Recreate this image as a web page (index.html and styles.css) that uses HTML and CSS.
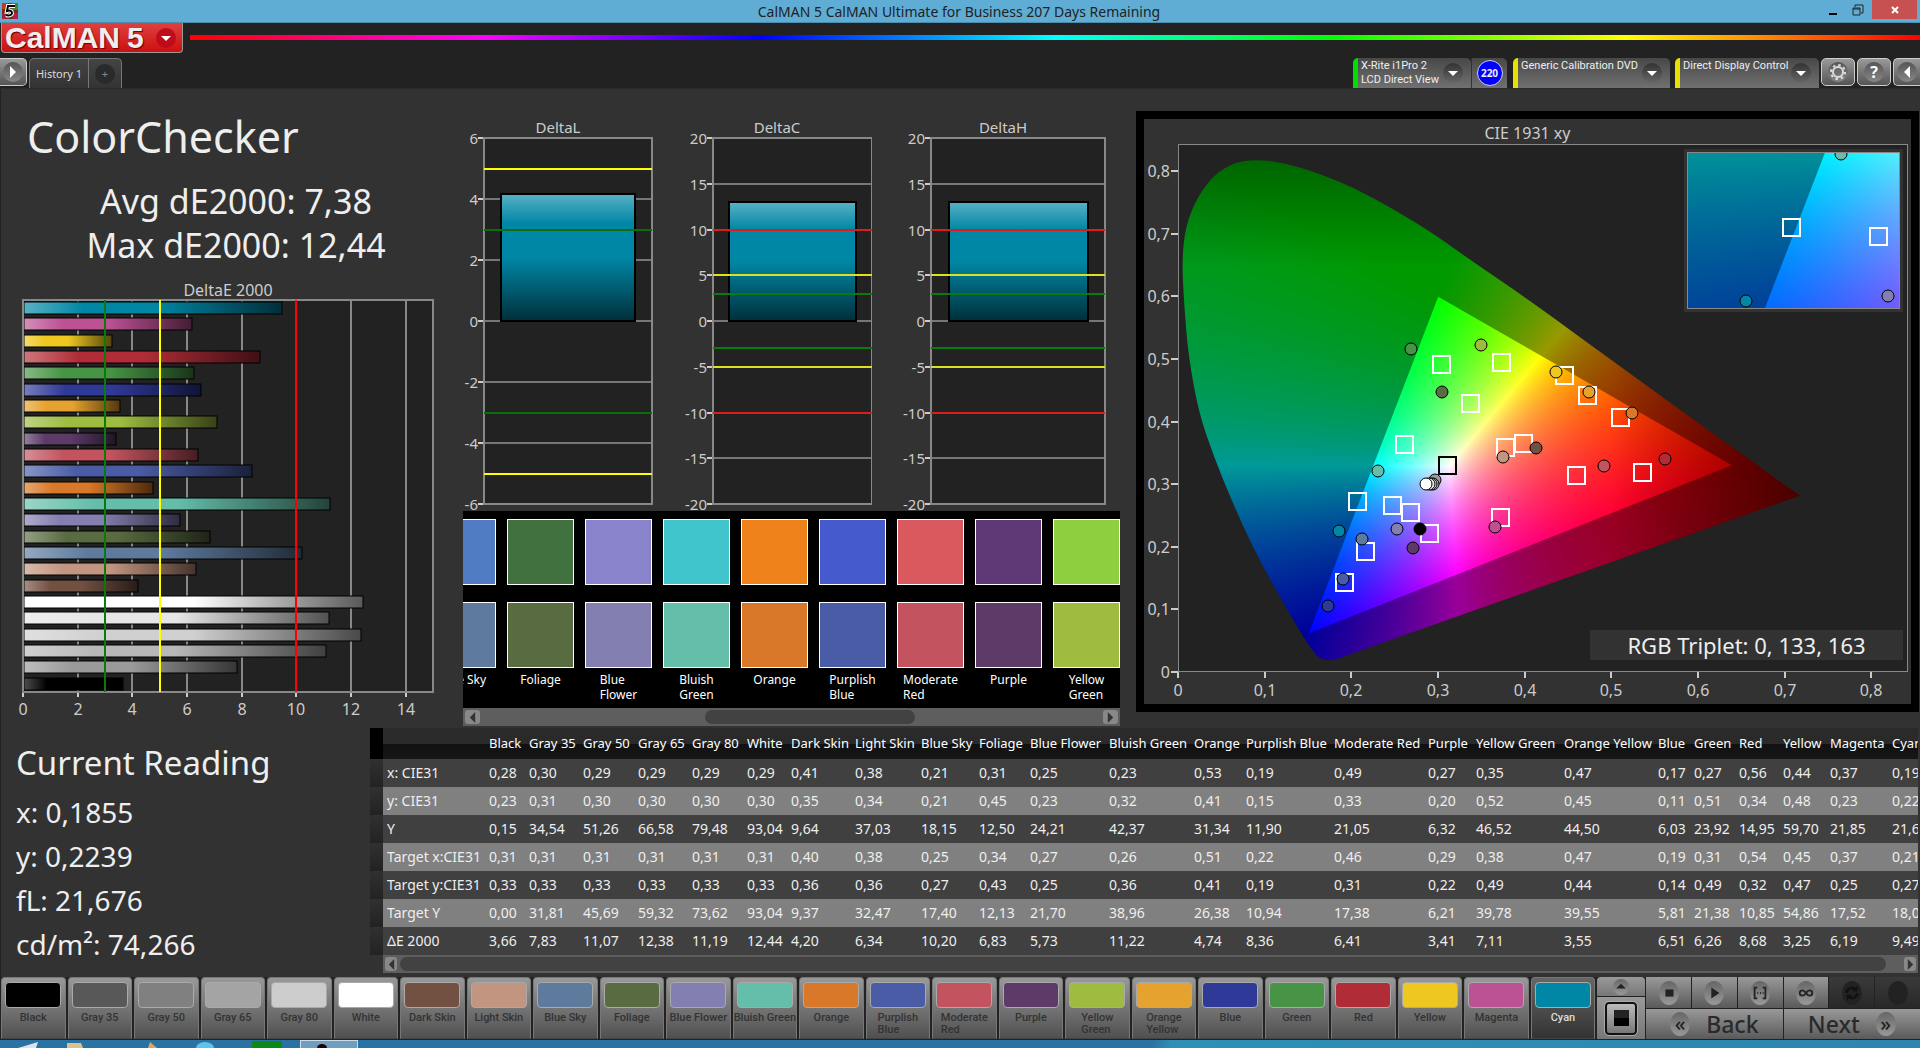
FILE: index.html
```html
<!DOCTYPE html>
<html lang="en">
<head>
<meta charset="utf-8">
<title>CalMAN 5</title>
<link rel="stylesheet" href="styles.css">
</head>
<body>
<header class="titlebar">
  <svg class="app-icon" viewBox="0 0 16 16" aria-hidden="true">
    <rect width="16" height="16" fill="#7a2a20"/><path d="M0 0h6v6H0z" fill="#c03a1c"/><path d="M10 0h6v7h-6z" fill="#3f8a3a"/><path d="M0 11h5v5H0z" fill="#a02038"/><path d="M11 10h5v6h-5z" fill="#b0204a"/>
    <path d="M13 3H6L5 8c3-1 5 0 5 2s-3 3-6 2" fill="none" stroke="#fff" stroke-width="4"/>
    <path d="M13 3H6L5 8c3-1 5 0 5 2s-3 3-6 2" fill="none" stroke="#000" stroke-width="2"/>
  </svg>
  <span class="window-title">CalMAN 5 CalMAN Ultimate for Business 207 Days Remaining</span>
  <div class="window-buttons">
    <button aria-label="Minimize"><svg viewBox="0 0 12 12"><path d="M2 9h8v2H2z"/></svg></button>
    <button aria-label="Restore"><svg viewBox="0 0 12 12"><path d="M1 4h7v7H1zM1 5h7M3 3V1h8v8H9" fill="none" stroke="#222"/></svg></button>
    <button class="close" aria-label="Close"><svg viewBox="0 0 12 12"><path d="M3 3l6 6M9 3l-6 6" fill="none" stroke="#fff" stroke-width="2"/></svg></button>
  </div>
</header>

<div class="brand-row">
  <button class="brand"><span>CalMAN</span><span>5</span><i class="knob"><svg viewBox="0 0 20 20"><path d="M5 8h10l-5 5z"/></svg></i></button>
  <div class="rainbow"></div>
</div>

<nav class="toolbar">
  <button class="square-button open-left" aria-label="Expand"><i class="knob"><svg viewBox="0 0 20 20"><path d="M7 4l6 6-6 6z"/></svg></i></button>
  <div class="tabs"><button class="tab">History 1</button><button class="tab add" aria-label="Add tab"><i>+</i></button></div>
  <div class="devices">
    <button class="device meter">X-Rite i1Pro 2<br>LCD Direct View<i class="knob"><svg viewBox="0 0 20 20"><path d="M5 8h10l-5 5z"/></svg></i></button>
    <div class="count"><b>220</b></div>
    <button class="device source">Generic Calibration DVD<i class="knob"><svg viewBox="0 0 20 20"><path d="M5 8h10l-5 5z"/></svg></i></button>
    <button class="device display">Direct Display Control<i class="knob"><svg viewBox="0 0 20 20"><path d="M5 8h10l-5 5z"/></svg></i></button>
    <button class="square-button" aria-label="Settings"><i class="knob"><svg viewBox="0 0 20 20"><circle cx="10" cy="10" r="5" fill="none" stroke="#ddd" stroke-width="2"/><circle cx="10" cy="10" r="7" fill="none" stroke="#ddd" stroke-width="2" stroke-dasharray="2.5 3"/></svg></i></button>
    <button class="square-button" aria-label="Help"><i class="knob"><b>?</b></i></button>
    <button class="square-button open-right" aria-label="Collapse"><i class="knob"><svg viewBox="0 0 20 20"><path d="M13 4l-6 6 6 6z"/></svg></i></button>
  </div>
</nav>

<main>
  <div class="upper">
    <section class="summary">
      <h1>ColorChecker</h1>
      <p class="stats">Avg dE2000: 7,38<br>Max dE2000: 12,44</p>
      <svg class="chart" id="delta-e"></svg>
    </section>
    <section class="middle">
      <div class="deltas">
        <svg class="chart" id="delta-l"></svg>
        <svg class="chart" id="delta-c"></svg>
        <svg class="chart" id="delta-h"></svg>
      </div>
      <div class="compare"><div class="compare-track" id="compare"></div></div>
      <div class="scrollbar wide">
        <button aria-label="Scroll left"><svg viewBox="0 0 10 12"><path d="M8 0v12L2 6z"/></svg></button>
        <div class="groove"><div class="thumb"></div></div>
        <button aria-label="Scroll right"><svg viewBox="0 0 10 12"><path d="M2 0v12l6-6z"/></svg></button>
      </div>
    </section>
    <section class="cie">
      <svg class="axes" id="cie-axes"></svg>
      <div class="plot"><canvas id="cie-canvas"></canvas><svg id="cie-marks"></svg></div>
      <div class="inset"><canvas id="inset-canvas"></canvas><svg id="inset-marks"></svg></div>
      <div class="triplet">RGB Triplet: 0, 133, 163</div>
    </section>
  </div>
  <div class="lower">
    <section class="reading">
      <h2>Current Reading</h2>
      <p>x: 0,1855</p><p>y: 0,2239</p><p>fL: 21,676</p><p>cd/m²: 74,266</p>
    </section>
    <section class="results">
      <div class="table-clip"><table id="results"></table></div>
      <div class="scrollbar">
        <button aria-label="Scroll left"><svg viewBox="0 0 10 12"><path d="M8 0v12L2 6z"/></svg></button>
        <div class="groove"><div class="thumb"></div></div>
        <button aria-label="Scroll right"><svg viewBox="0 0 10 12"><path d="M2 0v12l6-6z"/></svg></button>
      </div>
    </section>
  </div>
</main>

<footer class="pattern-bar">
  <div class="patterns" id="patterns"></div>
  <div class="single">
    <button class="up" aria-label="Up"><i class="disc"><svg viewBox="0 0 20 20"><path d="M4 12h12l-6-6z"/></svg></i></button>
    <button class="halt" aria-label="Pattern window"><span></span></button>
  </div>
  <div class="transport">
    <button aria-label="Stop"><i class="disc"><svg viewBox="0 0 20 20"><path d="M6 6h9v8H6z"/></svg></i></button>
    <button aria-label="Play"><i class="disc"><svg viewBox="0 0 20 20"><path d="M7 4l9 6-9 6z"/></svg></i></button>
    <button aria-label="Read series"><i class="disc"><svg viewBox="0 0 20 20"><path d="M7 4H4v12h3M13 4h3v12h-3M7 10h1m2 0h1m2 0h1" fill="none" stroke="#222" stroke-width="2"/></svg></i></button>
    <button aria-label="Continuous"><i class="disc"><svg viewBox="0 0 20 20"><path d="M10 10c-2-3-3-3-4-3a3 3 0 0 0 0 6c1 0 2 0 4-3s3-3 4-3a3 3 0 0 1 0 6c-1 0-2 0-4-3z" fill="none" stroke="#222" stroke-width="2"/></svg></i></button>
    <button class="off" aria-label="Refresh"><i class="disc"><svg viewBox="0 0 20 20"><path d="M4 10a6 6 0 0 1 10-4M16 10a6 6 0 0 1-10 4" fill="none" stroke="#111" stroke-width="3"/><path d="M16 2v6h-6zM4 18v-6h6z" fill="#111"/></svg></i></button>
    <button class="off" aria-label="Record"><i class="disc"></i></button>
    <button class="nav"><i class="disc">«</i>Back</button>
    <button class="nav">Next<i class="disc">»</i></button>
  </div>
</footer>
<div class="taskbar"><svg viewBox="0 0 400 8"><path d="M18 8l20-6-2 6z" fill="#d8e4ee"/><path d="M67 3h14l2 5H67z" fill="#d9c38a"/><path d="M150 2l7 6h-9z" fill="#e0a468"/><ellipse cx="205" cy="8" rx="9" ry="6" fill="#5cc4ea"/><path d="M252 1h30v7h-30z" fill="#0a8a14"/><path d="M300 0h58v8h-58z" fill="#c8dcea"/><path d="M301 1h56v7h-56z" fill="#6f9dbd"/><ellipse cx="322" cy="8" rx="5" ry="4" fill="#200"/></svg></div>
<script src="app.js"></script>
</body>
</html>
```
FILE: styles.css
```css
* { box-sizing: border-box; }
body {
  margin: 0; min-height: 100vh; display: flex; flex-direction: column;
  background: #222; color: #eee; font-family: "Noto Sans", "Open Sans", sans-serif; font-size: 14px;
  overflow: hidden;
}
button { font: inherit; color: inherit; border: 0; padding: 0; margin: 0; background: none; }
i { font-style: normal; }
svg { display: block; }
.knob, .disc { display: flex; align-items: center; justify-content: center; width: 20px; height: 20px; border-radius: 50%; }
.knob svg, .disc svg { width: 100%; height: 100%; fill: #fff; }

.titlebar { height: 23px; display: flex; align-items: flex-start; background: #5fadd4; color: #222; border-bottom: 1px solid #4c8dae; }
.app-icon { width: 16px; height: 16px; margin: 3px 0 0 2px; }
.window-title { flex: 1; text-align: center; font-size: 14px; line-height: 24px; padding-left: 80px; }
.window-buttons { display: flex; }
.window-buttons button { width: 25px; height: 19px; display: flex; align-items: center; justify-content: center; }
.window-buttons button svg { width: 12px; height: 12px; }
.window-buttons .close { width: 45px; margin: 0 3px 0 2px; background: #c75050; }

.brand-row { height: 32px; display: flex; gap: 7px; align-items: flex-start; padding-left: 1px; }
.brand {
  width: 182px; height: 30px; display: flex; align-items: center; gap: 7px; padding-left: 3px;
  background: linear-gradient(#e04040, #cc1010); border: 1px solid #999; border-top: 0; border-radius: 0 0 4px 4px;
  font: bold 30px/26px "Liberation Sans", sans-serif; color: #eee; text-shadow: 1px 1px 1px #600;
}
.brand .knob { background: #c00c18; margin-left: auto; margin-right: 6px; }
.rainbow { flex: 1; height: 5px; margin-top: 12px; background: linear-gradient(90deg, #f00, #f0f 17%, #00f 33%, #0ff 50%, #0f0 66%, #ff0 83%, #f00); }

.toolbar { height: 34px; padding-top: 3px; display: flex; align-items: flex-start; border-bottom: 1px solid #2a2a2a; }
.square-button {
  width: 34px; height: 28px; display: flex; align-items: center; justify-content: center;
  border: 1px solid #ccc; border-radius: 5px; background: linear-gradient(#999, #555);
}
.square-button .knob { background: linear-gradient(#555, #888); font-size: 16px; color: #fff; }
.open-left { width: 27px; border-left: 0; border-radius: 0 5px 5px 0; }
.open-right { width: 27px; border-right: 0; border-radius: 5px 0 0 5px; }
.tabs { display: flex; height: 30px; margin-left: 2px; border: 1px solid #777; border-bottom: 0; border-radius: 5px 5px 0 0; background: linear-gradient(#444, #333); }
.tab { width: 58px; font-size: 11px; color: #ddd; }
.tab.add { width: 33px; border-left: 1px solid #777; color: #888; display: flex; justify-content: center; align-items: center; }
.tab.add i { width: 20px; height: 20px; border-radius: 50%; background: #2a2a2a; line-height: 20px; }
.devices { margin-left: auto; display: flex; align-items: flex-start; gap: 2px; }
.device {
  position: relative; height: 30px; text-align: left; font: 11px/14px Roboto, sans-serif; padding: 1px 0 0 3px;
  display: block; border-left: 5px solid #e8e000; border-radius: 5px 5px 0 0; background: linear-gradient(#484848, #707070);
  display: flex; align-items: flex-start; white-space: nowrap;
}
.device .knob { position: absolute; right: 8px; top: 5px; background: linear-gradient(#333, #666); }
.device.meter { width: 118px; border-left-color: #0d0; }
.count { width: 36px; height: 30px; margin: 0 4px 0 -2px; display: flex; align-items: center; justify-content: center; background: linear-gradient(#484848, #707070); border-left: 1px solid #333; border-radius: 0 5px 0 0; }
.count b { width: 26px; height: 26px; border-radius: 50%; border: 1px solid #cce; background: #00f; font-size: 10px; line-height: 24px; text-align: center; }
.device.source { width: 157px; }
.device.display { width: 144px; margin-left: 3px; }

main { flex: 1; display: flex; flex-direction: column; background: #323232; border-left: 1px solid #222; }
.upper { flex: 1; display: flex; min-height: 0; }
.summary { width: 462px; display: flex; flex-direction: column; }
h1 { margin: 20px 0 0 26px; font-size: 43px; line-height: 56px; font-weight: 400; }
.stats { margin: 14px 0 0 8px; text-align: center; font-size: 34px; line-height: 44px; }
.chart { flex: 1; min-height: 0; min-width: 0; }
svg text { fill: #ccc; font-size: 15px; }
svg text.title { font-size: 16px; }
#delta-e { margin-top: 14px; }
.middle { width: 657px; display: flex; flex-direction: column; }
.deltas { height: 422px; display: flex; gap: 28px; margin-right: 14px; padding-top: 27px; }
#delta-l { flex: 190 1 0; }
#delta-c { flex: 192 1 0; }
#delta-h { flex: 206 1 0; }
.compare { height: 197px; background: #000; overflow: hidden; padding-top: 8px; }
.compare-track { display: flex; gap: 11px; margin-left: -34px; }
.compare-item { flex: none; width: 67px; display: flex; flex-direction: column; align-items: center; font-size: 12px; line-height: 15px; color: #fff; white-space: pre; }
.compare-item i { width: 67px; height: 66px; border: 1px solid #fff; margin-bottom: 17px; }
.compare-item i + i { margin-bottom: 4px; }
.scrollbar { height: 18px; display: flex; align-items: center; background: #5e5e5e; padding: 0 2px; gap: 3px; }
.scrollbar button { width: 12px; height: 14px; border-radius: 3px; background: #888; display: flex; align-items: center; justify-content: center; }
.scrollbar button svg { width: 9px; height: 11px; fill: #333; }
.scrollbar .groove { flex: 1; height: 14px; }
.scrollbar .thumb { height: 14px; width: 99%; border-radius: 7px; background: #424242; }
.scrollbar.wide button { width: 15px; }
.scrollbar.wide .thumb { width: 34%; margin-left: 36%; }

.cie { flex: 1; position: relative; margin: 22px 1px 16px 16px; border: 8px solid #000; display: grid; }
.axes { grid-area: 1 / 1; width: 100%; height: 100%; }
.plot { grid-area: 1 / 1; margin: 25px 3px 32px 34px; border: 1px solid #888; background: #222; display: grid; min-width: 0; min-height: 0; overflow: hidden; }
.plot > *, .inset > * { grid-area: 1 / 1; width: 100%; height: 100%; display: block; min-width: 0; min-height: 0; }
.inset { position: absolute; top: 30px; right: 8px; width: 219px; height: 163px; border: 3px solid #323232; outline: 1px solid #888; outline-offset: -4px; display: grid; background: #222; overflow: hidden; }
.triplet { position: absolute; right: 8px; bottom: 44px; width: 313px; line-height: 30px; background: #323232; text-align: center; font-size: 22px; }

.lower { height: 249px; display: flex; }
.reading { width: 369px; padding-left: 15px; font-size: 28px; line-height: 44px; }
.reading p { margin: 0; }
h2 { margin: 12px 0 4px; font-size: 33px; line-height: 46px; font-weight: 400; }
.results { flex: 1; min-width: 0; margin-right: 2px; }
.table-clip { overflow: hidden; }
table { border-collapse: collapse; table-layout: fixed; width: 1566px; }
th, td { padding: 0 0 0 4px; text-align: left; font-weight: 400; font-size: 14px; white-space: nowrap; height: 28px; line-height: 28px; }
thead th { height: 31px; line-height: 31px; font-size: 13px; background: linear-gradient(#2a2a2a 50%, #111 50%, #161616); color: #fff; }
thead th:first-child { background: #000; }
tbody tr { background: #404040; }
tbody tr:nth-child(even) { background: #808080; }
tbody td:first-child { background: linear-gradient(#303030, #222); }
.results .scrollbar { margin-left: 13px; }

.pattern-bar { height: 63px; display: flex; padding-bottom: 1px; }
.patterns { flex: 1595 1 0; display: grid; grid-template-columns: repeat(24, 1fr); gap: 2px; padding: 0 2px 0 1px; }
.patterns button {
  display: flex; flex-direction: column; align-items: center; justify-content: flex-start; padding-top: 4px; border-radius: 4px 4px 0 0; border: 1px solid #777; border-bottom-color: #444;
  background: linear-gradient(#999, #505050); color: #333; font: 500 11px/12px Roboto, sans-serif; white-space: pre; text-align: left; min-width: 0;
}
.patterns i { width: 56px; height: 26px; flex: none; border: 1px solid #aaa; border-radius: 4px; margin-bottom: 4px; }
.patterns .current { background: linear-gradient(#666, #333); color: #ddd; }
.single { flex: 48 1 0; display: flex; flex-direction: column; gap: 1px; }
.single button { display: flex; align-items: center; justify-content: center; background: linear-gradient(#999, #777); }
.single .up { height: 19px; border-radius: 4px 4px 0 0; }
.up .disc { width: 16px; height: 16px; }
.halt { flex: 1; }
.halt span { width: 32px; height: 33px; border: 2px solid #111; border-radius: 4px; outline: 1px solid #aaa; background: linear-gradient(#222 50%, #000 50%) center / 15px 16px no-repeat, linear-gradient(#bbb, #777); }
.transport { flex: 274 1 0; display: grid; grid-template-columns: repeat(6, 1fr); grid-template-rows: 31px 1fr; gap: 1px; padding-left: 1px; }
.transport button { display: flex; align-items: center; justify-content: center; background: linear-gradient(#999, #5a5a5a); }
.disc { background: linear-gradient(#666, #999); color: #222; font-size: 20px; }
.disc svg { fill: #222; }
.transport .disc { width: 20px; height: 24px; }
.transport .disc svg { width: 18px; height: 18px; }
.transport .off { background: linear-gradient(#3a3a3a, #282828); }
.transport .off .disc { background: #222; }
.transport .nav { grid-column: span 3; gap: 16px; font-size: 23px; font-weight: 500; color: #2a2a2a; line-height: 28px; }
.taskbar { height: 8px; background: linear-gradient(100deg, #2a72a3 60%, #2f8fb4 61%, #2d86ae); }
.taskbar svg { width: 400px; height: 8px; }
```
FILE: app.js
```js
const patches = [
  // name, reference colour, measured x, measured y, dE2000
  ["Black", "#000000", .279, .227, 3.66],
  ["Gray 35", "#9a9a9a", .296, .306, 7.83, "#585858"],
  ["Gray 50", "#b8b8b8", .294, .300, 11.07, "#808080"],
  ["Gray 65", "#d0d0d0", .292, .300, 12.38, "#a4a4a4"],
  ["Gray 80", "#e6e6e6", .289, .300, 11.19, "#cccccc"],
  ["White", "#ffffff", .286, .300, 12.44],
  ["Dark Skin", "#735142", .413, .357, 4.20],
  ["Light Skin", "#c29580", .375, .343, 6.34],
  ["Blue Sky", "#5e7a9d", .212, .211, 10.20],
  ["Foliage", "#596b41", .304, .448, 6.83],
  ["Blue Flower", "#837fb0", .252, .227, 5.73],
  ["Bluish Green", "#64bea9", .230, .320, 11.22],
  ["Orange", "#d97828", .524, .413, 4.74],
  ["Purplish Blue", "#4a5ca5", .190, .147, 8.36],
  ["Moderate Red", "#c2535f", .492, .329, 6.41],
  ["Purple", "#5c3b69", .271, .198, 3.41],
  ["Yellow Green", "#9dbc40", .350, .522, 7.11],
  ["Orange Yellow", "#e6a22e", .474, .448, 3.55],
  ["Blue", "#2f3997", .172, .105, 6.51],
  ["Green", "#489446", .268, .516, 6.26],
  ["Red", "#b02d38", .562, .340, 8.68],
  ["Yellow", "#eec820", .436, .479, 3.25],
  ["Magenta", "#bc5294", .366, .231, 6.19],
  ["Cyan", "#0087a5", .1855, .224, 9.49]
];
const targets = [[.304,.492],[.374,.496],[.338,.430],[.262,.364],[.378,.359],[.399,.366],[.207,.272],[.248,.266],[.268,.255],[.290,.222],[.216,.193],[.192,.142],[.373,.247],[.447,.475],[.473,.442],[.512,.408],[.461,.314],[.537,.319]];
const $ = id => document.getElementById(id);
const mix = (hex, to, t) => "rgb(" + [1, 3, 5].map(i => Math.round(parseInt(hex.substr(i, 2), 16) * (1 - t) + to * t)).join() + ")";
const wrap = s => /Green|Yellow|Red|Blue|Flower/.test(s.split(" ")[1] || "") ? s.replace(" ", "\n") : s;
const line = (x1, y1, x2, y2, c, w = 1) => `<line x1="${x1}" y1="${y1}" x2="${x2}" y2="${y2}" stroke="${c}" stroke-width="${w}"/>`;
const text = (x, y, s, anchor = "middle", cls = "tick") => `<text class="${cls}" x="${x}" y="${y}" text-anchor="${anchor}">${s}</text>`;

function gradient(id, color, vertical) {
  return `<linearGradient id="${id}" x2="${vertical ? 0 : 1}" y2="${vertical ? 1 : 0}"><stop offset="0" stop-color="${mix(color, 255, color === "#000000" ? .3 : .35)}"/><stop offset=".23" stop-color="${color}"/><stop offset=".5" stop-color="${color}"/><stop offset="1" stop-color="${mix(color, 0, .65)}"/></linearGradient>`;
}

function drawDeltaE() {
  const svg = $("delta-e"), w = svg.clientWidth, h = svg.clientHeight;
  const x0 = 22, x1 = w - 30, y0 = 19, y1 = h - 36, sx = v => Math.round(x0 + v * (x1 - x0) / 15);
  let out = `<rect x="${x0}" y="${y0}" width="${x1 - x0}" height="${y1 - y0}" fill="#222"/>`;
  out += text(w / 2 - 4, 15, "DeltaE 2000", "middle", "title");
  for (let v = 0; v < 15; v += 2) {
    out += line(sx(v), y0, sx(v), y1, "#888", 2) + line(sx(v), y1, sx(v), y1 + 5, "#ccc", 2) + text(sx(v), y1 + 23, v, "middle", "title");
  }
  const pitch = (y1 - y0) / 24;
  [...patches].reverse().forEach((p, i) => {
    const y = Math.round(y0 + i * pitch) + 2;
    out += gradient("bar" + i, p[1]) + `<rect x="${x0 + 1}" y="${y}" width="${sx(p[4]) - x0 - 1}" height="12" fill="url(#bar${i})" stroke="#000"/>`;
  });
  out += `<rect x="${x0}" y="${y0}" width="${x1 - x0}" height="${y1 - y0}" fill="none" stroke="#888" stroke-width="2"/>`;
  out += line(sx(3), y0, sx(3), y1, "#0a7a0a", 2) + line(sx(5), y0, sx(5), y1, "#ffff00", 2) + line(sx(10), y0, sx(10), y1, "#ff0000", 2);
  svg.innerHTML = out;
}

function drawDelta(id, title, max, step, left, value, limits) {
  const svg = $(id), w = svg.clientWidth, x0 = left, x1 = w - 1, y0 = 22, y1 = 388;
  const sy = v => Math.round(y0 + (max - v) * (y1 - y0) / (2 * max));
  let out = gradient(id + "-fill", "#0087a5", true) + `<rect x="${x0}" y="${y0}" width="${x1 - x0}" height="${y1 - y0}" fill="#222"/>` + text(w / 2, 17, title);
  for (let v = -max; v <= max; v += step) {
    out += line(x0 - 6, sy(v), x0, sy(v), "#ccc", 2) + line(x0, sy(v), x1, sy(v), "#777", 2) + text(x0 - 6, sy(v) + 6, v, "end");
  }
  const bw = Math.round((x1 - x0) * .8), bx = Math.round(x0 + (x1 - x0 - bw) / 2);
  out += `<rect x="${bx}" y="${sy(value)}" width="${bw}" height="${sy(0) - sy(value)}" fill="url(#${id}-fill)" stroke="#000" stroke-width="2"/>`;
  out += `<rect x="${x0}" y="${y0}" width="${x1 - x0}" height="${y1 - y0}" fill="none" stroke="#888" stroke-width="2"/>`;
  for (const [v, c] of limits) out += line(x0, sy(v), x1, sy(v), c, 2) + line(x0, sy(-v), x1, sy(-v), c, 2);
  svg.innerHTML = out;
}

const locus = [[.160,.024],[.152,.0366],[.137,.071],[.114,.125],[.087,.194],[.060,.276],[.040,.345],[.0227,.415],[.011,.504],[.006,.585],[.0033,.660],[.008,.716],[.022,.762],[.041,.796],[.066,.817],[.0984,.820],[.137,.810],[.191,.782],[.233,.753],[.291,.705],[.329,.667],[.406,.594],[.5,.499],[.602,.397],[.71,.289],[.719,.2816]];
function chroma(x, y, dim) {
  const X = x / y, Z = (1 - x - y) / y;
  const c = [3.2406 * X - 1.5372 - .4986 * Z, -.9689 * X + 1.8758 + .0415 * Z, .0557 * X - .2040 + 1.0570 * Z].map(v => Math.max(0, v));
  const m = Math.max(...c);
  let k = dim ? .6 : 1;
  if (x > .5) k *= Math.max(.5, 1 - (x - .5) * 2.4);
  if (y > .65) k *= 1 - (y - .65) * 2;
  return c.map(v => 255 * k * v / m);
}
function paint(canvas, xa, xb, ya, yb) {
  const w = canvas.width = canvas.clientWidth, h = canvas.height = canvas.clientHeight, g = canvas.getContext("2d");
  const px = x => (x - xa) / (xb - xa) * w, py = y => (yb - y) / (yb - ya) * h;
  const layer = dim => {
    const c = document.createElement("canvas"); c.width = w; c.height = h;
    const q = c.getContext("2d"), d = q.createImageData(w, h);
    for (let j = 0; j < h; j++) for (let i = 0; i < w; i++) {
      const rgb = chroma(xa + (i + .5) / w * (xb - xa), Math.max(.001, yb - (j + .5) / h * (yb - ya)), dim);
      d.data.set([rgb[0], rgb[1], rgb[2], 255], (j * w + i) * 4);
    }
    q.putImageData(d, 0, 0);
    return c;
  };
  g.save(); g.beginPath(); g.moveTo(px(.719), py(.2816)); g.lineTo(px(.18), py(.018)); g.quadraticCurveTo(px(.167), py(.015), px(.160), py(.024));
  for (let i = 1; i < locus.length - 1; i++) {
    const a = locus[i], b = locus[i + 1];
    g.quadraticCurveTo(px(a[0]), py(a[1]), px((a[0] + b[0]) / 2), py((a[1] + b[1]) / 2));
  }
  g.closePath(); g.clip(); g.drawImage(layer(true), 0, 0); g.restore();
  g.beginPath(); g.moveTo(px(.64), py(.33)); g.lineTo(px(.3), py(.6)); g.lineTo(px(.15), py(.06)); g.closePath(); g.clip();
  g.drawImage(layer(false), 0, 0);
}
function marks(svg, xa, xb, ya, yb) {
  const w = svg.clientWidth, h = svg.clientHeight, px = x => Math.round((x - xa) / (xb - xa) * w), py = y => Math.round((yb - y) / (yb - ya) * h);
  const box = (x, y, c, s) => `<rect x="${px(x) - 9}" y="${py(y) - 8}" width="17" height="17" fill="none" stroke="${c}" stroke-width="${s}"/>`;
  let out = targets.map(t => box(t[0], t[1], "#fff", 2)).join("") + box(.311, .330, "#000", 2);
  out += patches.map(p => `<circle cx="${px(p[2])}" cy="${py(p[3])}" r="6" fill="${p[1]}" stroke="#000"/>`).join("");
  svg.innerHTML = out;
}
function drawAxes() {
  const svg = $("cie-axes"), w = svg.clientWidth, h = svg.clientHeight, x0 = 34, y1 = h - 32, fmt = i => i ? "0," + i : "0";
  const kx = (w - 37) / .8425, ky = (h - 57) / .8435;
  let out = text(w / 2, 20, "CIE 1931 xy", "middle", "title");
  for (let i = 0; i <= 8; i++) {
    const x = Math.round(x0 + i * kx / 10), y = Math.round(y1 - i * ky / 10);
    out += line(x, y1, x, y1 + 6, "#ccc", 2) + text(x, y1 + 24, fmt(i), "middle", "title") + line(x0 - 7, y, x0, y, "#ccc", 2) + text(x0 - 8, y + 6, fmt(i), "end", "title");
  }
  svg.innerHTML = out;
}

const rows = {
  "x: CIE31": "0,28 0,30 0,29 0,29 0,29 0,29 0,41 0,38 0,21 0,31 0,25 0,23 0,53 0,19 0,49 0,27 0,35 0,47 0,17 0,27 0,56 0,44 0,37 0,19",
  "y: CIE31": "0,23 0,31 0,30 0,30 0,30 0,30 0,35 0,34 0,21 0,45 0,23 0,32 0,41 0,15 0,33 0,20 0,52 0,45 0,11 0,51 0,34 0,48 0,23 0,22",
  "Y": "0,15 34,54 51,26 66,58 79,48 93,04 9,64 37,03 18,15 12,50 24,21 42,37 31,34 11,90 21,05 6,32 46,52 44,50 6,03 23,92 14,95 59,70 21,85 21,68",
  "Target x:CIE31": "0,31 0,31 0,31 0,31 0,31 0,31 0,40 0,38 0,25 0,34 0,27 0,26 0,51 0,22 0,46 0,29 0,38 0,47 0,19 0,31 0,54 0,45 0,37 0,21",
  "Target y:CIE31": "0,33 0,33 0,33 0,33 0,33 0,33 0,36 0,36 0,27 0,43 0,25 0,36 0,41 0,19 0,31 0,22 0,49 0,44 0,14 0,49 0,32 0,47 0,25 0,27",
  "Target Y": "0,00 31,81 45,69 59,32 73,62 93,04 9,37 32,47 17,40 12,13 21,70 38,96 26,38 10,94 17,38 6,21 39,78 39,55 5,81 21,38 10,85 54,86 17,52 18,04",
  "ΔE 2000": "3,66 7,83 11,07 12,38 11,19 12,44 4,20 6,34 10,20 6,83 5,73 11,22 4,74 8,36 6,41 3,41 7,11 3,55 6,51 6,26 8,68 3,25 6,19 9,49"
};
const widths = [13, 102, 40, 54, 55, 54, 55, 44, 64, 66, 58, 51, 79, 85, 52, 88, 94, 48, 88, 94, 36, 45, 44, 47, 62, 50];
$("results").innerHTML = "<colgroup>" + widths.map(w => `<col style="width:${w}px">`).join("") + "</colgroup><thead><tr><th></th><th></th>" +
  patches.map(p => `<th scope="col">${p[0]}</th>`).join("") + "</tr></thead><tbody>" +
  Object.entries(rows).map(([k, v]) => `<tr><td></td><th scope="row">${k}</th>${v.split(" ").map(c => `<td>${c}</td>`).join("")}</tr>`).join("") + "</tbody>";

const measured = ["#4f7cc2", "#427140", "#8883ca", "#41c5cd", "#ee811a", "#455acd", "#da595e", "#5d3a75", "#8ecf40"];
$("compare").innerHTML = patches.slice(8, 17).map((p, i) => `<div class="compare-item"><i style="background:${measured[i]}"></i><i style="background:${p[1]}"></i><span>${wrap(p[0])}</span></div>`).join("");
$("patterns").innerHTML = patches.map(p => {
  const label = /Flower|Bluish/.test(p[0]) ? p[0] : wrap(p[0]);
  return `<button${p[0] === "Cyan" ? ' class="current"' : ""}><i style="background:${p[5] || p[1]}"></i><span>${label}</span></button>`;
}).join("");

function draw() {
  drawDeltaE();
  drawDelta("delta-l", "DeltaL", 6, 2, 21, 4.16, [[5, "#ffff00"], [3, "#0a6e0a"]]);
  drawDelta("delta-c", "DeltaC", 20, 5, 32, 13, [[10, "#dd1c1c"], [5, "#dde020"], [3, "#0a7a0a"]]);
  drawDelta("delta-h", "DeltaH", 20, 5, 31, 13, [[10, "#dd1c1c"], [5, "#dde020"], [3, "#0a7a0a"]]);
  drawAxes();
  paint($("cie-canvas"), 0, .8425, 0, .8435);
  marks($("cie-marks"), 0, .8425, 0, .8435);
  paint($("inset-canvas"), .1575, .2578, .2185, .3213);
  marks($("inset-marks"), .1575, .2578, .2185, .3213);
}
draw();
addEventListener("resize", draw);
```
